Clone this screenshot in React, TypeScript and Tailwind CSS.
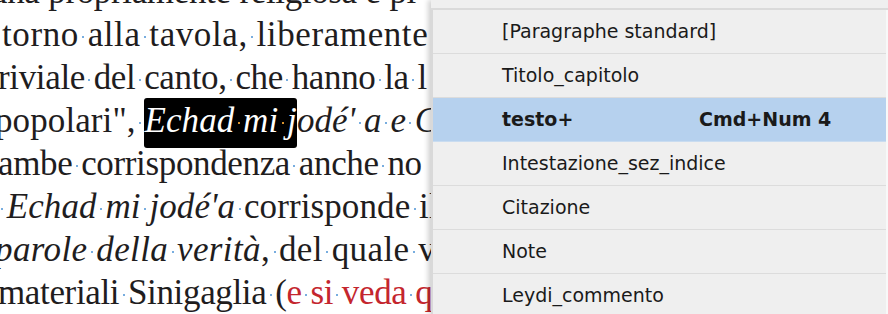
import React from "react";

type Seg = { t: string; i?: boolean; sel?: boolean; red?: boolean };
type Line = { segs: Seg[]; ml: string; tr?: string };

const Dot = ({ c }: { c: string }) => (
  <span className="inline-block w-[0.25em] text-center">
    <span className={`inline-block h-[2px] w-[2px] align-[0.22em] ${c}`} />
  </span>
);

const renderText = (s: Seg, key: number) => {
  const parts = s.t.split(" ");
  const dotColor = s.sel ? "bg-[#d8932e]" : "bg-[#78addf]";
  const content: React.ReactNode[] = [];
  parts.forEach((p, idx) => {
    if (idx > 0) content.push(<Dot key={`d${idx}`} c={dotColor} />);
    if (p) content.push(<span key={`w${idx}`}>{p}</span>);
  });
  let cls = "";
  if (s.i) cls += " italic";
  if (s.red) cls += " text-[#c4262e]";
  if (s.sel) cls += " bg-black text-white rounded-[3px] pt-[3px] pb-[8px]";
  return (
    <span key={key} className={cls}>
      {content}
    </span>
  );
};

const lines: Line[] = [
  { segs: [{ t: "una propriamente religiosa e pi" }], ml: "ml-[-10px]" },
  { segs: [{ t: "torno alla tavola, liberamente" }], ml: "ml-[2px]", tr: "tracking-[0.6px]" },
  { segs: [{ t: "riviale del canto, che hanno la l" }], ml: "ml-[-2px]" },
  {
    segs: [
      { t: 'popolari", ' },
      { t: "Echad mi j", i: true, sel: true },
      { t: "odé' a e C", i: true },
    ],
    ml: "ml-[-5px]",
    tr: "tracking-[0.1px]",
  },
  { segs: [{ t: "ambe corrispondenza anche no" }], ml: "ml-[-2px]" },
  {
    segs: [
      { t: " " },
      { t: "Echad mi jodé'a", i: true },
      { t: " corrisponde il" },
    ],
    ml: "ml-[-2px]",
    tr: "tracking-[0.1px]",
  },
  {
    segs: [{ t: "parole della verità", i: true }, { t: ", del quale vi" }],
    ml: "ml-[-5px]",
    tr: "tracking-[0.4px]",
  },
  {
    segs: [{ t: "materiali Sinigaglia (" }, { t: "e si veda q", red: true }],
    ml: "ml-[-2px]",
  },
];

const items: { name: string; sc?: string; active?: boolean }[] = [
  { name: "[Paragraphe standard]" },
  { name: "Titolo_capitolo" },
  { name: "testo+", sc: "Cmd+Num 4", active: true },
  { name: "Intestazione_sez_indice" },
  { name: "Citazione" },
  { name: "Note" },
  { name: "Leydi_commento" },
];

export default function App() {
  return (
    <div className="flex h-[314px] w-[888px] overflow-hidden bg-white">
      <div className="h-full w-[431px] shrink-0 overflow-hidden">
        <div
          className="mt-[-30px] text-[35px] leading-[43px] tracking-[-0.01em] text-[#1f1d1e]"
          style={{ fontFamily: '"Liberation Serif", "Times New Roman", serif' }}
        >
          {lines.map((l, li) => (
            <div key={li} className={`whitespace-nowrap ${l.ml} ${l.tr ?? ""}`}>
              {l.segs.map((s, si) => renderText(s, si))}
            </div>
          ))}
        </div>
      </div>
      <div
        className="flex h-full min-w-0 flex-1 flex-col shadow-[-3px_0_5px_rgba(0,0,0,0.18)]"
        style={{ fontFamily: '"DejaVu Sans", "Lucida Grande", sans-serif' }}
      >
        <div className="h-[10px] shrink-0 border-b-2 border-[#dadada] bg-[#efefef]" />
        <div className="flex flex-1">
          <div className="w-[2px] bg-[#d9d9d9]" />
          <div className="min-w-0 flex-1 bg-[#efefef]">
            {items.map((it, idx) => (
              <div
                key={idx}
                className={`flex h-[44px] items-center whitespace-nowrap border-b pl-[69px] text-[19px] text-[#1a1a1a] ${
                  it.active
                    ? "border-[#c9dcf0] bg-[#b6d1ee] font-bold"
                    : "border-[#dcdcdc]"
                }`}
              >
                <span className="min-w-[197px] shrink-0 whitespace-nowrap">{it.name}</span>
                {it.sc && <span className="whitespace-nowrap">{it.sc}</span>}
              </div>
            ))}
          </div>
          <div className="w-[2px] bg-[#f8f8f8]" />
        </div>
      </div>
    </div>
  );
}
